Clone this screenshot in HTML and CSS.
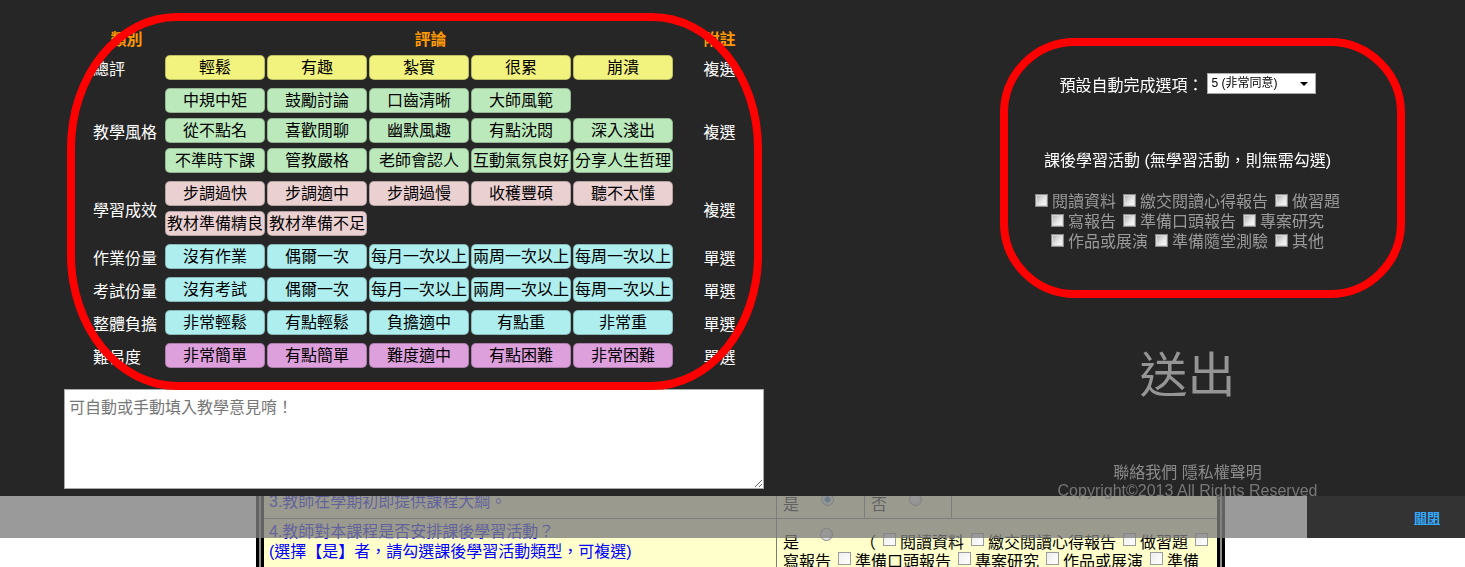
FILE: index.html
```html
<!DOCTYPE html>
<html lang="zh-Hant">
<head>
<meta charset="utf-8">
<title>教學評量</title>
<link rel="stylesheet" href="styles.css">
</head>
<body>
<main class="page">
  <div class="survey">
    <div class="survey-inner">
      <div class="q-row q3">
        <div class="cell question">3.教師在學期初即提供課程大綱。</div>
        <div class="cell opt"><span>是</span><span class="radio checked"></span></div>
        <div class="cell opt"><span>否</span><span class="radio"></span></div>
        <div class="cell blank"></div>
      </div>
      <div class="q-row q4">
        <div class="cell question">4.教師對本課程是否安排課後學習活動？<br>(選擇【是】者，請勾選課後學習活動類型，可複選)</div>
        <div class="cell acts">
          <div class="act-line">
            <span class="yes">是</span><span class="radio"></span><span class="paren">（</span>
            <span class="act"><span class="box"></span>閱讀資料</span>
            <span class="act"><span class="box"></span>繳交閱讀心得報告</span>
            <span class="act"><span class="box"></span>做習題</span>
            <span class="act"><span class="box"></span></span>
          </div>
          <div class="act-line">
            <span class="act first">寫報告</span>
            <span class="act"><span class="box"></span>準備口頭報告</span>
            <span class="act"><span class="box"></span>專案研究</span>
            <span class="act"><span class="box"></span>作品或展演</span>
            <span class="act"><span class="box"></span>準備</span>
          </div>
        </div>
      </div>
    </div>
  </div>
</main>

<section class="panel">
  <div class="panel-left">
    <div class="eval">
      <div class="eval-head"><span>類別</span><span>評論</span><span>附註</span></div>

      <div class="cat">
        <div class="cat-label">總評</div>
        <div class="chips yellow">
          <span class="chip">輕鬆</span><span class="chip">有趣</span><span class="chip">紮實</span><span class="chip">很累</span><span class="chip">崩潰</span>
        </div>
        <div class="cat-note">複選</div>
      </div>

      <div class="cat">
        <div class="cat-label">教學風格</div>
        <div class="chips green">
          <span class="chip">中規中矩</span><span class="chip">鼓勵討論</span><span class="chip">口齒清晰</span><span class="chip row-end">大師風範</span>
          <span class="chip">從不點名</span><span class="chip">喜歡閒聊</span><span class="chip">幽默風趣</span><span class="chip">有點沈悶</span><span class="chip">深入淺出</span>
          <span class="chip">不準時下課</span><span class="chip">管教嚴格</span><span class="chip">老師會認人</span><span class="chip">互動氣氛良好</span><span class="chip">分享人生哲理</span>
        </div>
        <div class="cat-note">複選</div>
      </div>

      <div class="cat">
        <div class="cat-label">學習成效</div>
        <div class="chips pink">
          <span class="chip">步調過快</span><span class="chip">步調適中</span><span class="chip">步調過慢</span><span class="chip">收穫豐碩</span><span class="chip">聽不太懂</span>
          <span class="chip">教材準備精良</span><span class="chip">教材準備不足</span>
        </div>
        <div class="cat-note">複選</div>
      </div>

      <div class="cat">
        <div class="cat-label">作業份量</div>
        <div class="chips cyan">
          <span class="chip">沒有作業</span><span class="chip">偶爾一次</span><span class="chip">每月一次以上</span><span class="chip">兩周一次以上</span><span class="chip">每周一次以上</span>
        </div>
        <div class="cat-note">單選</div>
      </div>

      <div class="cat">
        <div class="cat-label">考試份量</div>
        <div class="chips cyan">
          <span class="chip">沒有考試</span><span class="chip">偶爾一次</span><span class="chip">每月一次以上</span><span class="chip">兩周一次以上</span><span class="chip">每周一次以上</span>
        </div>
        <div class="cat-note">單選</div>
      </div>

      <div class="cat">
        <div class="cat-label">整體負擔</div>
        <div class="chips cyan">
          <span class="chip">非常輕鬆</span><span class="chip">有點輕鬆</span><span class="chip">負擔適中</span><span class="chip">有點重</span><span class="chip">非常重</span>
        </div>
        <div class="cat-note">單選</div>
      </div>

      <div class="cat">
        <div class="cat-label">難易度</div>
        <div class="chips plum">
          <span class="chip">非常簡單</span><span class="chip">有點簡單</span><span class="chip">難度適中</span><span class="chip">有點困難</span><span class="chip">非常困難</span>
        </div>
        <div class="cat-note">單選</div>
      </div>
    </div>

    <textarea class="opinion" placeholder="可自動或手動填入教學意見唷！"></textarea>
  </div>

  <div class="panel-right">
    <div class="preset">
      <span class="preset-label">預設自動完成選項：</span>
      <div class="select"><span>5 (非常同意)</span><span class="caret"></span></div>
    </div>
    <div class="act-title">課後學習活動 (無學習活動，則無需勾選)</div>
    <div class="ck-lines">
      <div class="ck-line">
        <span class="ck"><span class="gbox"></span>閱讀資料</span>
        <span class="ck"><span class="gbox"></span>繳交閱讀心得報告</span>
        <span class="ck"><span class="gbox"></span>做習題</span>
      </div>
      <div class="ck-line">
        <span class="ck"><span class="gbox"></span>寫報告</span>
        <span class="ck"><span class="gbox"></span>準備口頭報告</span>
        <span class="ck"><span class="gbox"></span>專案研究</span>
      </div>
      <div class="ck-line">
        <span class="ck"><span class="gbox"></span>作品或展演</span>
        <span class="ck"><span class="gbox"></span>準備隨堂測驗</span>
        <span class="ck"><span class="gbox"></span>其他</span>
      </div>
    </div>
    <div class="submit">送出</div>
    <div class="foot-links">聯絡我們 隱私權聲明</div>
    <div class="copyright">Copyright©2013 All Rights Reserved</div>
  </div>

  <div class="mark mark-left"></div>
  <div class="mark mark-right"></div>
</section>

<div class="bottombar">
  <div class="shade"></div>
  <div class="closebar"><a href="#" class="close-link">關閉</a></div>
</div>
</body>
</html>
```

FILE: styles.css
```css
* { box-sizing: border-box; }

html, body {
  margin: 0;
  padding: 0;
  overflow: hidden;
}

body {
  width: 1465px;
  height: 567px;
  background: #fff;
  color: #000;
  font-family: "Liberation Sans", "Noto Sans CJK TC", sans-serif;
  font-size: 16px;
}

/* ---------- underlying page ---------- */
.page {
  padding-top: 484px;
}

.survey {
  margin-left: 256px;
  width: 969px;
  border: 3px solid #000;
  border-bottom: 0;
  padding: 0 2px;
  background: #8c8c8c;
}

.survey-inner {
  border: 3px solid #000;
  border-bottom: 0;
  background: #ffc;
}

.q-row {
  display: grid;
}

.q3 {
  grid-template-columns: 513px 88px 87px 1fr;
  height: 29px;
}

.q4 {
  grid-template-columns: 513px 1fr;
  height: 60px;
}

.cell {
  border-right: 1px solid #7c7c7c;
  border-bottom: 1px solid #7c7c7c;
}

.q4 .cell {
  border-bottom: 0;
}

.cell.blank,
.cell.acts {
  border-right: 0;
}

.question {
  color: #00f;
  line-height: 20px;
  padding: 2px 0 0 5px;
}

.q4 .question {
  padding-top: 3px;
}

.opt {
  padding: 5px 0 0 6px;
  line-height: 19px;
  display: flex;
  align-items: flex-start;
}

.radio {
  display: inline-block;
  width: 13px;
  height: 13px;
  border-radius: 50%;
  border: 1px solid #8a8a8a;
  background: radial-gradient(circle at 40% 35%, #fff 0, #e6e6e6 55%, #c4c4c4 100%);
  flex: none;
}

.opt .radio {
  margin: -2px 0 0 22px;
}

.radio.checked {
  background: radial-gradient(circle, #2c5d8a 0, #4d86b8 30%, #cfe0ee 45%, #e8e8e8 70%, #c4c4c4 100%);
}

.acts {
  padding: 12px 0 0 6px;
}

.act-line {
  display: flex;
  align-items: center;
  height: 19px;
  white-space: nowrap;
}

.act-line .radio {
  margin: -12px 0 0 21px;
}

.paren {
  margin-left: 27px;
}

.act {
  display: inline-flex;
  align-items: center;
  margin-left: 7px;
}

.act.first {
  margin-left: 0;
}

.box {
  display: inline-block;
  width: 13px;
  height: 13px;
  border: 1px solid #9c9c9c;
  background: linear-gradient(135deg, #eee, #fff);
  margin: -3px 4px 0 0;
}

/* ---------- dark overlay panel ---------- */
.panel {
  position: fixed;
  top: 0;
  left: 0;
  width: 1465px;
  height: 496px;
  background: #262626;
  display: flex;
  z-index: 5;
}

.panel-left {
  width: 910px;
  padding: 30px 0 0 64px;
}

.eval {
  margin-left: 24px;
  width: 655px;
}

.eval-head {
  display: grid;
  grid-template-columns: 77px 531px 47px;
  height: 20px;
  line-height: 20px;
  margin-bottom: 5px;
  text-align: center;
  color: #f90;
  font-weight: bold;
}

.cat {
  display: grid;
  grid-template-columns: 77px 531px 47px;
  align-items: center;
  margin-bottom: 8px;
}

.cat:last-child {
  margin-bottom: 0;
}

.cat-label {
  color: #fff;
  padding-left: 5px;
}

.cat-note {
  color: #fff;
  text-align: center;
}

.chips {
  display: flex;
  flex-wrap: wrap;
  gap: 5px 2px;
}

.chip {
  width: 100px;
  height: 25px;
  line-height: 23px;
  border: 1px solid rgba(0, 0, 0, 0.22);
  border-radius: 5px;
  text-align: center;
  white-space: nowrap;
  color: #000;
  overflow: hidden;
}

.chip.row-end {
  margin-right: 125px;
}

.yellow .chip { background: #f2f27e; }
.green .chip { background: #bbe9bb; }
.pink .chip { background: #ebd0d1; }
.cyan .chip { background: #afeeee; }
.plum .chip { background: #dda0dd; }

.opinion {
  display: block;
  margin-top: 21px;
  width: 700px;
  height: 100px;
  border: 1px solid #a9a9a9;
  padding: 4px;
  font-family: "Liberation Sans", "Noto Sans CJK TC", sans-serif;
  font-size: 16px;
  background: #fff;
  resize: both;
}

.opinion::placeholder {
  color: #777;
}

.panel-right {
  flex: 1;
  text-align: center;
  padding-top: 73px;
}

.preset {
  display: flex;
  justify-content: center;
  align-items: center;
  gap: 3px;
  height: 21px;
  color: #fff;
}

.select {
  width: 109px;
  height: 21px;
  border: 1px solid #a9a9a9;
  background: #fff;
  color: #000;
  font-size: 12px;
  line-height: 19px;
  text-align: left;
  padding-left: 4px;
  display: flex;
  align-items: center;
  justify-content: space-between;
}

.caret {
  width: 0;
  height: 0;
  border-left: 4px solid transparent;
  border-right: 4px solid transparent;
  border-top: 4px solid #000;
  margin-right: 7px;
}

.act-title {
  margin-top: 57px;
  line-height: 20px;
  color: #fff;
}

.ck-lines {
  margin-top: 19px;
  color: #9a9a9a;
}

.ck-line {
  display: flex;
  justify-content: center;
  align-items: center;
  gap: 7px;
  height: 20px;
  white-space: nowrap;
}

.ck {
  display: inline-flex;
  align-items: center;
  gap: 4px;
}

.gbox {
  display: inline-block;
  width: 13px;
  height: 13px;
  border: 1px solid #8a8a8a;
  background: linear-gradient(135deg, #a9a9a9 0, #e6e6e6 55%, #fff 100%);
  box-shadow: inset 0 0 0 1px #d6d6d6;
}

.submit {
  margin-top: 98px;
  font-size: 48px;
  line-height: 56px;
  color: #959595;
}

.foot-links {
  margin-top: 60px;
  line-height: 18px;
  color: #8a8a8a;
}

.copyright {
  line-height: 18px;
  color: #777;
}

.mark {
  position: absolute;
  border: 8px solid #f00;
  pointer-events: none;
}

.mark-left {
  left: 67px;
  top: 13px;
  width: 695px;
  height: 377px;
  border-radius: 110px / 135px;
}

.mark-right {
  left: 1000px;
  top: 38px;
  width: 405px;
  height: 260px;
  border-radius: 75px;
}

/* ---------- bottom bar ---------- */
.bottombar {
  position: fixed;
  left: 0;
  top: 496px;
  width: 1465px;
  height: 42px;
  display: flex;
  z-index: 6;
}

.shade {
  width: 1307px;
  background: rgba(125, 125, 125, 0.78);
}

.closebar {
  flex: 1;
  background: #333;
  display: flex;
  align-items: center;
  justify-content: flex-end;
  padding-right: 25px;
}

.close-link {
  color: #3af;
  font-weight: bold;
  font-size: 13px;
  text-decoration: underline;
}
```
